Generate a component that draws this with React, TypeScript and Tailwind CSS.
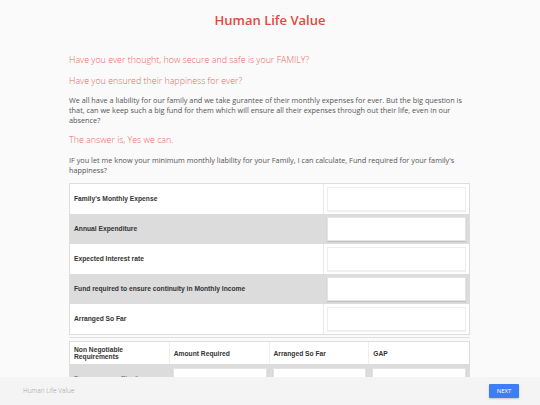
import React from 'react';

const rows = [
  { label: "Family's Monthly Expense", shade: false },
  { label: 'Annual Expenditure', shade: true },
  { label: 'Expected Interest rate', shade: false },
  { label: 'Fund required to ensure continuity in Monthly Income', shade: true },
  { label: 'Arranged So Far', shade: false },
];

const heads = ['Non Negotiable Requirements', 'Amount Required', 'Arranged So Far', 'GAP'];

function Field({ shade }: { shade: boolean }) {
  return (
    <div
      className={`h-[24px] w-full bg-white border ${
        shade ? 'border-[#e4e4e4] shadow-[0_1px_1px_rgba(0,0,0,0.12)]' : 'border-[#eeeeee] shadow-[0_1px_1px_rgba(0,0,0,0.06)]'
      }`}
    />
  );
}

export default function App() {
  return (
    <div className="min-h-[405px] bg-[#fafafa] font-['Open_Sans',sans-serif] text-[#555]">
      <div className="h-[40px] flex items-center justify-center">
        <h1 className="text-[13px] font-semibold text-[#e2493d] leading-none">Human Life Value</h1>
      </div>

      <div className="ml-[69px] w-[402px]">
        <h4 className="mt-[10px] text-[8.9px] font-light leading-[20px] text-[#e4695d]">
          Have you ever thought, how secure and safe is your FAMILY?
        </h4>
        <h4 className="mt-[1px] text-[8.9px] font-light leading-[20px] text-[#e4695d]">
          Have you ensured their happiness for ever?
        </h4>
        <p className="mt-[4px] text-[7.3px] leading-[10px]">
          We all have a liability for our family and we take gurantee of their monthly expenses for ever. But the big
          question is that, can we keep such a big fund for them which will ensure all their expenses through out their
          life, even in our absence?
        </p>
        <h4 className="mt-[5px] text-[8.9px] font-light leading-[20px] text-[#e4695d]">The answer is, Yes we can.</h4>
        <p className="mt-[5px] text-[7.3px] leading-[10px]">
          IF you let me know your minimum monthly liability for your Family, I can calculate, Fund required for your
          family's happiness?
        </p>
      </div>

      <div className="ml-[69px] w-[401px] mt-[8px] font-['Liberation_Sans',Arial,sans-serif] text-[6.7px] font-bold text-[#333]">
        <div className="border border-[#dddddd] bg-white">
          {rows.map((r) => (
            <div key={r.label} className={`flex h-[30px] ${r.shade ? 'bg-[#dcdcdc]' : 'bg-white'}`}>
              <div className={`w-[254px] flex items-center pl-[4px] ${r.shade ? '' : 'border-r border-[#e8e8e8]'}`}>
                {r.label}
              </div>
              <div className="flex-1 px-[3px] pt-[3px]">
                <Field shade={r.shade} />
              </div>
            </div>
          ))}
        </div>
        <div className="mt-[2px] h-[2px] border-t border-[#e0e0e0]" />

        <div className="mt-[2px] border border-[#dddddd] bg-white">
          <div className="grid grid-cols-4 h-[22px]">
            {heads.map((h, i) => (
              <div key={h} className={`flex items-center px-[4px] leading-[7px] ${i < 3 ? 'border-r border-[#eeeeee]' : ''}`}>
                {h}
              </div>
            ))}
          </div>
          <div className="grid grid-cols-4 h-[40px] bg-[#dcdcdc]">
            <div className="px-[4px] pt-[10px] font-normal text-[#666] leading-[9px] text-justify">
              Term Plan/Insurance Protection
            </div>
            {[0, 1, 2].map((i) => (
              <div key={i} className="px-[3px] pt-[4px]">
                <Field shade />
              </div>
            ))}
          </div>
        </div>
      </div>

      <div className="fixed bottom-0 left-0 right-0 h-[28px] bg-[#f4f4f4] flex items-center justify-between pl-[23px] pr-[21px]">
        <span className="text-[6.5px] font-light text-[#9a9a9a]">Human Life Value</span>
        <button className="w-[30px] h-[14px] bg-[#3d7ff0] text-white text-[6px] flex items-center justify-center rounded-[1px] shadow-[0_1px_2px_rgba(0,0,0,0.2)]">
          NEXT
        </button>
      </div>
    </div>
  );
}
